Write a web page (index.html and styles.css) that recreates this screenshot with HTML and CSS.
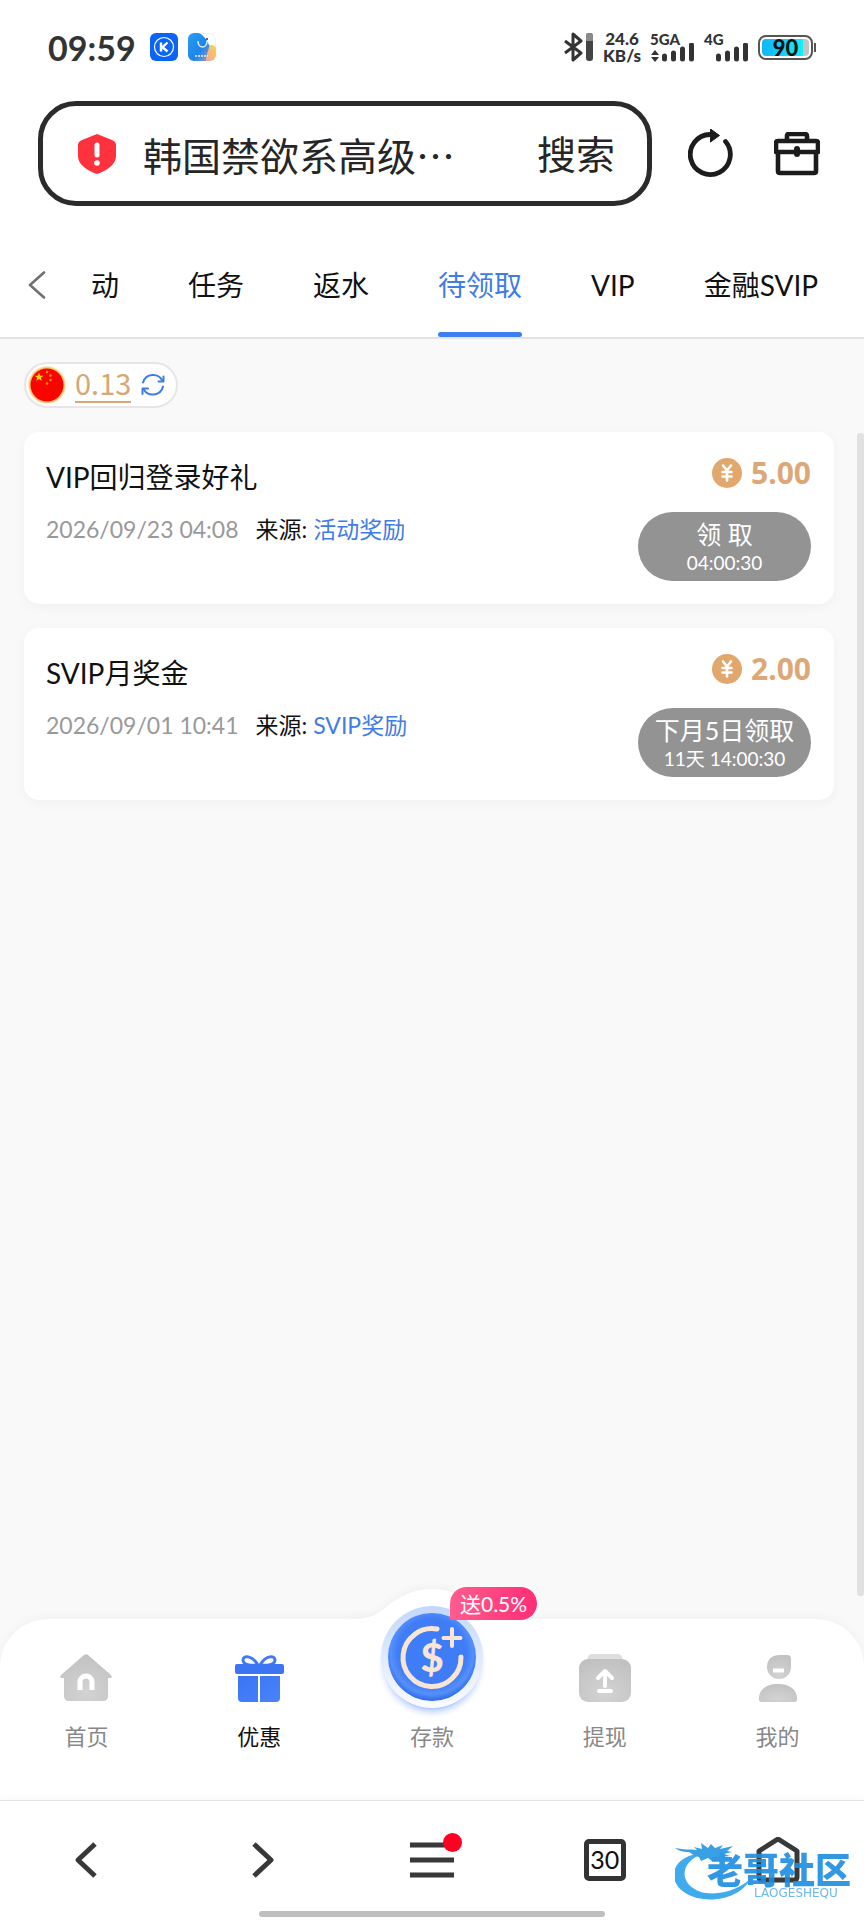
FILE: index.html
```html
<!DOCTYPE html>
<html lang="zh-CN">
<head>
  <meta charset="UTF-8" />
  <meta name="viewport" content="width=device-width, initial-scale=1.0" />
  <title>待领取</title>
  <link rel="stylesheet" href="styles.css">
</head>
<body>
  <header>
    <div class="status-bar">
      <span class="time">09:59</span>
      <svg class="app-icon" width="28" height="28" viewBox="0 0 28 28">
        <rect width="28" height="28" rx="6" fill="#0a64f5"/>
        <circle cx="14" cy="14" r="9.5" fill="none" stroke="#fff" stroke-width="1.2"/>
        <path d="M11 9.500v9M17.500 9.500l-5 4.700 5 4.300" fill="none" stroke="#fff" stroke-width="2.400"/>
      </svg>
      <svg class="app-icon" width="28" height="28" viewBox="0 0 28 28">
        <defs>
          <linearGradient id="warm" x1="0" y1="1" x2="1" y2="0">
            <stop offset="0" stop-color="#f2a0a0"/>
            <stop offset="1" stop-color="#ffd24d"/>
          </linearGradient>
          <linearGradient id="cool" x1="0" y1="0" x2="1" y2="1">
            <stop offset="0" stop-color="#2a9df0"/>
            <stop offset="0.600" stop-color="#1d84ea"/>
            <stop offset="1" stop-color="#9d9cc0"/>
          </linearGradient>
        </defs>
        <rect x="0.500" y="0.500" width="27" height="27" rx="6" fill="#fff" stroke="#f1f1f1"/>
        <path d="M15 28V18c0-4 4-6 7-6s6 1 6 4v6a6 6 0 0 1-6 6z" fill="url(#warm)"/>
        <path d="M6 0h4c5 1 9 7 11 12 1 4-3 8-3 16H6a6 6 0 0 1-6-6V6a6 6 0 0 1 6-6z" fill="url(#cool)"/>
        <path d="M10 8c0 8 9 8 9 0" fill="none" stroke="#d8efff" stroke-width="1.500"/>
        <circle cx="19" cy="6" r="1" fill="#333"/>
        <path d="M7 23h13" stroke="#e4f1ff" stroke-width="1.500" stroke-dasharray="2 1"/>
      </svg>
      <div class="status-right">
        <svg width="30" height="30" viewBox="0 0 30 30">
          <path d="M1 9l16 12-8 7V2l8 7L1 21" fill="none" stroke="#333" stroke-width="3" stroke-linejoin="round"/>
          <rect x="22" y="1" width="7" height="28" rx="3" fill="#444"/>
          <path d="M22 9V4a3 3 0 0 1 3-3h1a3 3 0 0 1 3 3v5z" fill="#8a8a8a"/>
        </svg>
        <div class="speed"><span>24.6</span><span>KB/s</span></div>
        <div class="signal">
          <span>5GA</span>
          <svg width="45" height="19" viewBox="0 0 45 19">
            <path d="M1 12l4-5 4 5zM1 14l4 5 4-5z" fill="#333"/>
            <path d="M14.500 16v-3M23.500 16v-6M32.500 16V6M41.500 16V2" stroke="#333" stroke-width="5" stroke-linecap="round"/>
          </svg>
        </div>
        <div class="signal">
          <span>4G</span>
          <svg width="45" height="19" viewBox="0 0 45 19">
            <path d="M14.500 16v-3M23.500 16v-6M32.500 16V6M41.500 16V2" stroke="#333" stroke-width="5" stroke-linecap="round"/>
          </svg>
        </div>
        <div class="battery"><span>90</span></div>
      </div>
    </div>

    <form class="address-row">
      <div class="search-box">
        <svg width="38" height="40" viewBox="0 0 38 40">
          <path d="M19 0L34 6q4 1.500 4 5v11c0 8-8 14-19 18C8 36 0 30 0 22V11q0-3.500 4-5z" fill="#fe313e"/>
          <path d="M19 11v10" stroke="#fff" stroke-width="5" stroke-linecap="round"/>
          <circle cx="19" cy="29" r="2.800" fill="#fff"/>
        </svg>
        <input type="text" value="韩国禁欲系高级…" aria-label="搜索内容">
        <button type="button" class="search-btn">搜索</button>
      </div>
      <button type="button" class="icon-btn" aria-label="刷新">
        <svg width="46" height="50" viewBox="0 0 46 50">
          <path d="M37.500 12.500A20 20 0 1 1 22 5.500" fill="none" stroke="#1c1c1c" stroke-width="4.800" stroke-linecap="round"/>
          <path d="M22.500 0l9 6.500-9 6.500z" fill="#1c1c1c" stroke="#1c1c1c" stroke-linejoin="round"/>
        </svg>
      </button>
      <button type="button" class="icon-btn" aria-label="工具箱">
        <svg width="46" height="44" viewBox="0 0 46 44" fill="none" stroke="#1c1c1c" stroke-width="4.600" stroke-linejoin="round">
          <path d="M13 8V4q0-2 2-2h16q2 0 2 2v4"/>
          <path d="M4 9h38q2 0 2 2v9H2v-9q0-2 2-2z"/>
          <path d="M4 20v19q0 2 2 2h34q2 0 2-2V20"/>
          <path d="M23 17v5" stroke-width="6" stroke-linecap="round"/>
        </svg>
      </button>
    </form>

    <nav class="tabs">
      <button class="tabs-back" aria-label="返回">
        <svg width="18" height="28" viewBox="0 0 18 28">
          <path d="M16 1.500L2 14l14 12.500" fill="none" stroke="#707070" stroke-width="2.600" stroke-linecap="round" stroke-linejoin="round"/>
        </svg>
      </button>
      <a href="#">动</a>
      <a href="#">任务</a>
      <a href="#">返水</a>
      <a href="#" class="active">待领取</a>
      <a href="#">VIP</a>
      <a href="#">金融SVIP</a>
    </nav>
  </header>

  <main>
    <div class="balance">
      <svg width="38" height="38" viewBox="0 0 38 38">
        <circle cx="19" cy="19" r="19" fill="#fdeccb"/>
        <circle cx="19" cy="19" r="18" fill="#fbc568"/>
        <circle cx="19" cy="19" r="16.500" fill="#f90500"/>
        <path d="M11 6.500l1.200 3.200h3.300l-2.700 2 1 3.300-2.800-2-2.800 2 1-3.300-2.700-2h3.300z" fill="#ffd800"/>
        <g fill="#ff9a00">
          <circle cx="19" cy="6" r="1.200"/>
          <circle cx="22.500" cy="9.500" r="1.200"/>
          <circle cx="22.500" cy="14" r="1.200"/>
          <circle cx="19" cy="17.500" r="1.200"/>
        </g>
      </svg>
      <span class="balance-value">0.13</span>
      <button aria-label="刷新余额">
        <svg width="24" height="24" viewBox="0 0 24 24" fill="none" stroke="#3f7ce8" stroke-width="2" stroke-linecap="round" stroke-linejoin="round">
          <path d="M2 9.500A10.500 10.500 0 0 1 21.500 8M22 13.500A10.500 10.500 0 0 1 2.500 16"/>
          <path d="M22.500 3.500V8.500H17.500M1.500 21V15.500H7"/>
        </svg>
      </button>
    </div>

    <article class="card">
      <div class="card-info">
        <h2>VIP回归登录好礼</h2>
        <p><time>2026/09/23 04:08</time><span>来源: <a href="#">活动奖励</a></span></p>
      </div>
      <div class="card-side">
        <div class="amount">
          <svg width="30" height="30" viewBox="0 0 30 30">
            <circle cx="15" cy="15" r="15" fill="#e2a76c"/>
            <path d="M11 7.500l4 5 4-5M15 12.500v10M10.500 14h9M10.500 18.500h9" fill="none" stroke="#fff" stroke-width="2.600" stroke-linecap="round"/>
          </svg>
          5.00
        </div>
        <button class="claim">领 取<small>04:00:30</small></button>
      </div>
    </article>

    <article class="card">
      <div class="card-info">
        <h2>SVIP月奖金</h2>
        <p><time>2026/09/01 10:41</time><span>来源: <a href="#">SVIP奖励</a></span></p>
      </div>
      <div class="card-side">
        <div class="amount">
          <svg width="30" height="30" viewBox="0 0 30 30">
            <circle cx="15" cy="15" r="15" fill="#e2a76c"/>
            <path d="M11 7.500l4 5 4-5M15 12.500v10M10.500 14h9M10.500 18.500h9" fill="none" stroke="#fff" stroke-width="2.600" stroke-linecap="round"/>
          </svg>
          2.00
        </div>
        <button class="claim">下月5日领取<small>11天 14:00:30</small></button>
      </div>
    </article>
    <div class="scrollbar"></div>
  </main>

  <nav class="app-nav">
    <!-- raised part of the bar behind the deposit button -->
    <svg class="bump" width="160" height="32" viewBox="0 0 160 32">
      <path d="M0 32V30C22 30 26 24 38 15C64-5 96-5 122 15C134 24 138 30 160 30V32z" fill="#fff"/>
    </svg>
    <a href="#">
      <svg width="52" height="48" viewBox="0 0 52 48">
        <defs>
          <radialGradient id="gray" cx="0.5" cy="0.8" r="0.9">
            <stop offset="0" stop-color="#d3d3d3"/>
            <stop offset="1" stop-color="#bfbfbf"/>
          </radialGradient>
        </defs>
        <path d="M24 1q2-1.500 4 0l23 20q2 3-1 3h-2v18q0 5-5 5H9q-5 0-5-5V24H2q-3 0-1-3z" fill="url(#gray)"/>
        <path d="M20 36v-8a6 6 0 0 1 12 0v8" fill="none" stroke="#fff" stroke-width="5"/>
      </svg>
      首页
    </a>
    <a href="#" class="current">
      <svg width="52" height="48" viewBox="0 0 52 48">
        <defs>
          <linearGradient id="gift" x1="0" y1="0" x2="1" y2="1">
            <stop offset="0" stop-color="#3a74f2"/>
            <stop offset="1" stop-color="#4a84fa"/>
          </linearGradient>
        </defs>
        <path d="M25 11C18 12 10 11 10 6s9-5 15 5zM27 11c7 1 15 0 15-5s-9-5-15 5z" fill="none" stroke="#3f78f4" stroke-width="3"/>
        <rect x="2" y="10" width="49" height="10" rx="2" fill="#3b75f3"/>
        <path d="M5 22h20v26H9q-4 0-4-4zM27 22h20v22q0 4-4 4H27z" fill="url(#gift)"/>
      </svg>
      优惠
    </a>
    <a href="#" class="deposit">
      <svg width="120" height="120" viewBox="0 0 120 120">
        <defs>
          <radialGradient id="disc" cx="0.5" cy="0.45" r="0.55">
            <stop offset="0" stop-color="#3f7df9"/>
            <stop offset="0.700" stop-color="#3f7cf6"/>
            <stop offset="0.860" stop-color="#5590fb"/>
            <stop offset="1" stop-color="#2f68e6"/>
          </radialGradient>
          <linearGradient id="rim" x1="0" y1="0" x2="0" y2="1">
            <stop offset="0" stop-color="#c3d8f8"/>
            <stop offset="1" stop-color="#fafcff"/>
          </linearGradient>
          <radialGradient id="glow">
            <stop offset="0.780" stop-color="#a9c5fc"/>
            <stop offset="1" stop-color="#fff" stop-opacity="0"/>
          </radialGradient>
        </defs>
        <circle cx="60" cy="63" r="56" fill="url(#glow)"/>
        <circle cx="60" cy="56" r="51" fill="url(#rim)"/>
        <circle cx="60" cy="56" r="44" fill="url(#disc)"/>
        <path d="M65 28A29 29 0 1 0 89 56" fill="none" stroke="#f8e5d6" stroke-width="5" stroke-linecap="round"/>
        <path d="M80 28v17M71.500 37h17" stroke="#f8e5d6" stroke-width="4" stroke-linecap="round"/>
        <text class="dollar" x="60" y="71" text-anchor="middle">$</text>
      </svg>
      存款
      <span class="badge">送0.5%</span>
    </a>
    <a href="#">
      <svg width="52" height="48" viewBox="0 0 52 48">
        <path d="M13 0h26q3 0 4 3l2 6H7l2-6q1-3 4-3z" fill="#dedede"/>
        <rect y="5" width="52" height="43" rx="9" fill="url(#gray)"/>
        <path d="M26 32V17M19 24l7-7 7 7M20 37h12" fill="none" stroke="#fff" stroke-width="4" stroke-linecap="round" stroke-linejoin="round"/>
      </svg>
      提现
    </a>
    <a href="#">
      <svg width="52" height="48" viewBox="0 0 52 48">
        <path d="M28 1h7q4 0 4 4v8a12 12 0 1 1-24 0C15 5 20 1 28 1z" fill="url(#gray)"/>
        <path d="M7 43c1-9 9-13 19-13s18 4 19 13q1 5-3 5H10q-4 0-3-5z" fill="url(#gray)"/>
        <path d="M21 16.500h11" stroke="#fff" stroke-width="4"/>
      </svg>
      我的
    </a>
  </nav>

  <footer class="browser-bar">
    <button aria-label="后退">
      <svg width="46" height="46" viewBox="0 0 46 46" class="line"><path d="M32 7L15 23l17 16"/></svg>
    </button>
    <button aria-label="前进">
      <svg width="46" height="46" viewBox="0 0 46 46" class="line"><path d="M18 7l17 16-17 16"/></svg>
    </button>
    <button aria-label="菜单" class="menu">
      <svg width="46" height="46" viewBox="0 0 46 46" class="line"><path d="M1 8h44M1 23h44M1 38h44"/></svg>
      <span class="dot"></span>
    </button>
    <button aria-label="标签页"><span class="tab-count">30</span></button>
    <button aria-label="主页">
      <svg width="46" height="46" viewBox="0 0 46 46" class="line"><path d="M4 14L23 2l19 12v26q0 3-3 3H7q-3 0-3-3z"/></svg>
    </button>
    <div class="home-indicator"></div>
    <div class="watermark">
      <svg width="80" height="58" viewBox="0 0 80 58">
        <path d="M30 11C-8 12-12 47 22 56c22 5 46-3 54-20-9 10-32 19-50 14C2 42 5 18 30 11z" fill="#2ba3ea"/>
        <path d="M0 6c10 2 14 1 22 2l-3-3 8 2-1-6 7 5 3-4 4 4 8-3-3 4 13-3-6 5 5 1-8 2 6 2-9 1 3 4-9-3-3 3-4-3-7 3-2-4-4-1-6-4C11 10 5 10 0 6z" fill="#2496e2"/>
      </svg>
      <div class="watermark-text">
        <strong>老哥社区</strong>
        <span>LAOGESHEQU</span>
      </div>
    </div>
  </footer>
</body>
</html>
```

FILE: styles.css
```css
* {
  box-sizing: border-box;
}

body {
  font-family: Lato, 'Noto Sans CJK SC', sans-serif;
  background-color: #f9f9f9;
  color: #111;
  margin: 0;
  min-height: 100vh;
  display: flex;
  flex-direction: column;
}

svg {
  display: block;
  flex: none;
}

button {
  font: inherit;
  color: inherit;
  background: none;
  border: none;
  padding: 0;
  cursor: pointer;
}

a {
  color: inherit;
  text-decoration: none;
}

header {
  background: #fff;
}

/* phone status bar */
.status-bar {
  display: flex;
  align-items: center;
  height: 94px;
  padding: 0 48px;
}

.time {
  font-size: 34px;
  font-weight: bold;
  color: #333;
  margin-right: 14px;
}

.app-icon {
  margin-right: 10px;
}

.status-right {
  display: flex;
  align-items: center;
  gap: 9px;
  margin-left: auto;
}

.speed {
  display: flex;
  flex-direction: column;
  align-items: center;
  font-size: 17px;
  line-height: 17px;
  font-weight: 900;
  color: #333;
}

.signal span {
  display: block;
  font-size: 15px;
  line-height: 15px;
  font-weight: 900;
  color: #333;
}

.signal svg {
  margin-top: -4px;
}

.battery {
  position: relative;
  width: 55px;
  height: 25px;
  padding: 2px;
  border: 2px solid #555;
  border-radius: 8px;
  margin-right: 3px;
}

.battery::after {
  content: '';
  position: absolute;
  top: 6px;
  right: -5px;
  width: 2px;
  height: 9px;
  background: #555;
}

.battery span {
  display: block;
  border-radius: 4px;
  background: linear-gradient(90deg, #12b4fb, #12f0fb 88%, #c4c4c4 88%);
  font-size: 22px;
  line-height: 17px;
  font-weight: 900;
  text-align: center;
}

/* address bar */
.address-row {
  display: flex;
  align-items: center;
  gap: 40px;
  padding: 7px 44px 0 38px;
}

.search-box {
  flex: 1;
  min-width: 0;
  display: flex;
  align-items: center;
  height: 105px;
  padding: 0 32px 0 35px;
  border: 5px solid #2b2b2b;
  border-radius: 38px;
  margin-right: -4px;
}

.search-box input {
  flex: 1;
  min-width: 0;
  margin-left: 27px;
  padding: 0;
  border: none;
  outline: none;
  background: none;
  font-family: 'Noto Sans CJK SC', sans-serif;
  font-size: 39px;
  line-height: 60px;
  color: #262626;
}

.search-btn {
  font-size: 39px;
  line-height: 60px;
  color: #262626;
}

/* tabs */
.tabs {
  display: flex;
  gap: 69px;
  height: 133px;
  padding: 27px 28px 0;
  border-bottom: 2px solid #e3e3e3;
  overflow: hidden;
}

.tabs-back {
  display: flex;
  align-items: center;
  margin-right: -24px;
}

.tabs a {
  font-size: 28px;
  line-height: 104px;
  white-space: nowrap;
}

.tabs .active {
  color: #3f7ce8;
  position: relative;
}

.tabs .active::after {
  content: '';
  position: absolute;
  left: 0;
  right: 0;
  bottom: 0;
  height: 5px;
  border-radius: 3px;
  background: #3f7ef0;
}

/* reward list */
main {
  flex: 1;
  position: relative;
  padding: 23px 30px 40px 24px;
}

.balance {
  display: inline-flex;
  align-items: center;
  height: 46px;
  padding: 0 11px 0 2px;
  border: 2px solid #e6e6e6;
  border-radius: 23px;
  background: #fff;
}

.balance-value {
  margin: 0 10px 0 9px;
  padding-bottom: 4px;
  font-family: 'Noto Sans CJK SC', sans-serif;
  font-size: 29px;
  line-height: 30px;
  color: #d6a877;
  border-bottom: 2px solid #d6a877;
}

.card {
  display: flex;
  justify-content: space-between;
  height: 172px;
  margin-bottom: 24px;
  padding: 23px 23px 23px 22px;
  border-radius: 15px;
  background: #fff;
  box-shadow: 0 3px 12px rgba(0, 0, 0, 0.04);
}

.balance + .card {
  margin-top: 24px;
}

.card h2 {
  margin: 0;
  font-size: 28px;
  line-height: 44px;
  font-weight: normal;
}

.card p {
  display: flex;
  gap: 17px;
  margin: 12px 0 0;
  font-size: 23px;
  line-height: 36px;
}

.card time {
  color: #999;
}

.card p a {
  color: #3f7ce8;
}

.card-side {
  display: flex;
  flex-direction: column;
  align-items: flex-end;
  justify-content: space-between;
}

.amount {
  display: flex;
  align-items: center;
  gap: 9px;
  font-family: 'Noto Sans', sans-serif;
  font-size: 30px;
  line-height: 36px;
  font-weight: bold;
  color: #dca878;
}

.claim {
  width: 173px;
  height: 69px;
  border-radius: 35px;
  background: #939393;
  color: #fff;
  font-size: 25px;
  line-height: 32px;
}

.claim small {
  display: block;
  font-size: 19px;
  line-height: 26px;
}

.scrollbar {
  position: absolute;
  top: 94px;
  right: 0;
  bottom: 23px;
  width: 7px;
  border-radius: 3px;
  background: #e1e1e1;
}

/* app navigation */
.app-nav {
  position: relative;
  display: grid;
  grid-template-columns: repeat(5, 1fr);
  height: 181px;
  border-radius: 48px 48px 0 0;
  background: #fff;
  box-shadow: 0 -3px 8px rgba(0, 0, 0, 0.03);
}

.bump {
  position: absolute;
  left: 50%;
  top: -30px;
  margin-left: -80px;
  filter: drop-shadow(0 -3px 3px rgba(0, 0, 0, 0.03));
}

.app-nav a {
  display: flex;
  flex-direction: column;
  align-items: center;
  padding-top: 35px;
  gap: 19px;
  font-size: 22px;
  line-height: 32px;
  color: #888;
}

.app-nav .current {
  color: #111;
}

.app-nav .deposit {
  position: relative;
  gap: 0;
  padding: 0;
}

.deposit svg {
  margin-top: -18px;
}

.dollar {
  font-size: 40px;
  font-weight: 900;
  fill: #f8e5d6;
}

.badge {
  position: absolute;
  left: 50%;
  top: -32px;
  margin-left: 18px;
  padding: 0 10px;
  border-radius: 17px 17px 17px 0;
  background: linear-gradient(90deg, #ff5c8e, #ff2e76);
  color: #fff;
  font-size: 21px;
  line-height: 33px;
  white-space: nowrap;
}

/* browser toolbar */
.browser-bar {
  position: relative;
  display: grid;
  grid-template-columns: repeat(5, 1fr);
  justify-items: center;
  height: 120px;
  background: #fff;
  border-top: 1px solid #e2e2e2;
  box-shadow: 0 -3px 5px rgba(0, 0, 0, 0.02);
}

.browser-bar button {
  position: relative;
  height: 118px;
}

.line {
  fill: none;
  stroke: #383838;
  stroke-width: 5;
  stroke-linejoin: round;
}

.dot {
  position: absolute;
  top: 32px;
  right: -7px;
  width: 19px;
  height: 19px;
  border-radius: 50%;
  background: #ff0022;
}

.tab-count {
  display: block;
  width: 42px;
  height: 42px;
  border: 5px solid #333;
  border-radius: 5px;
  font-size: 25px;
  line-height: 31px;
}

.home-indicator {
  position: absolute;
  left: 30%;
  right: 30%;
  bottom: 3px;
  height: 6px;
  border-radius: 3px;
  background: #bfbfbf;
}

.watermark {
  position: absolute;
  right: 13px;
  bottom: 20px;
  display: flex;
  align-items: flex-end;
  opacity: 0.9;
}

.watermark-text {
  display: flex;
  flex-direction: column;
  align-items: center;
  margin-left: -48px;
  color: #1d8de0;
}

.watermark strong {
  font-size: 36px;
  font-weight: 900;
  line-height: 32px;
}

.watermark span {
  font-family: 'DejaVu Sans', sans-serif;
  font-size: 12px;
  line-height: 14px;
  margin-left: 34px;
  color: #5fb0ea;
}
```
